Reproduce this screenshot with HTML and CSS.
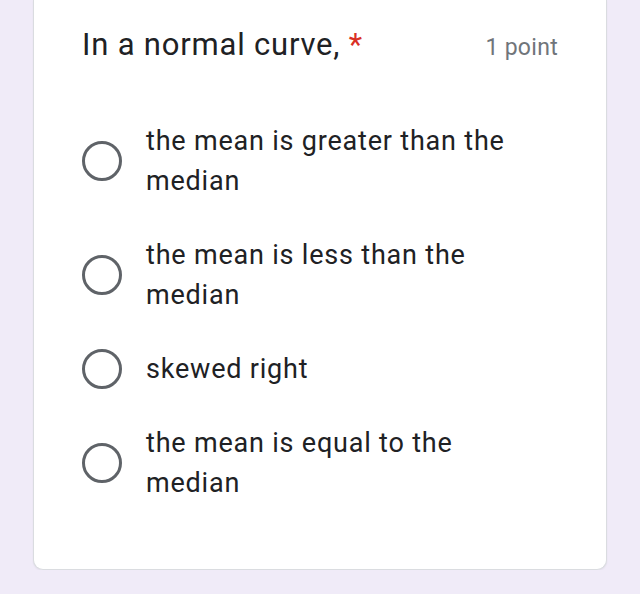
FILE: index.html
```html
<!DOCTYPE html>
<html>
<head>
<meta charset="utf-8">
<link rel="stylesheet" href="styles.css">
</head>
<body>
<div class="card">
  <div class="header">
    <div class="title">In a normal curve,<span class="req"> *</span></div>
    <div class="points">1 point</div>
  </div>
  <div class="options">
    <div class="option"><span class="radio"></span><span class="label">the mean is greater than the median</span></div>
    <div class="option"><span class="radio"></span><span class="label">the mean is less than the median</span></div>
    <div class="option"><span class="radio"></span><span class="label">skewed right</span></div>
    <div class="option"><span class="radio"></span><span class="label">the mean is equal to the median</span></div>
  </div>
</div>
</body>
</html>
```

FILE: styles.css
```css
html, body {
  margin: 0;
  padding: 0;
  background: #f0ebf8;
  font-family: Roboto, "Noto Sans", sans-serif;
}
.card {
  box-sizing: border-box;
  margin: 0 33px 0 33px;
  width: 574px;
  height: 570px;
  background: #fff;
  border: 1px solid #dadce0;
  border-top: none;
  border-radius: 0 0 10px 10px;
  box-shadow: 0 1px 2px rgba(0,0,0,0.06);
  padding: 24px 48px 0 48px;
}
.header {
  display: flex;
  justify-content: space-between;
  align-items: baseline;
}
.title {
  font-size: 31px;
  line-height: 42px;
  letter-spacing: 0.8px;
  color: #202124;
}
.req {
  color: #d93025;
}
.points {
  font-size: 23px;
  letter-spacing: 0.3px;
  color: #70757a;
}
.options {
  display: flex;
  flex-direction: column;
  gap: 34px;
  margin-top: 55px;
}
.option {
  display: flex;
  align-items: center;
  gap: 24px;
}
.radio {
  flex: none;
  box-sizing: border-box;
  width: 40px;
  height: 40px;
  border: 3.5px solid #5f6368;
  border-radius: 50%;
}
.label {
  font-size: 27px;
  line-height: 40px;
  letter-spacing: 0.8px;
  color: #202124;
  width: 380px;
}
```
